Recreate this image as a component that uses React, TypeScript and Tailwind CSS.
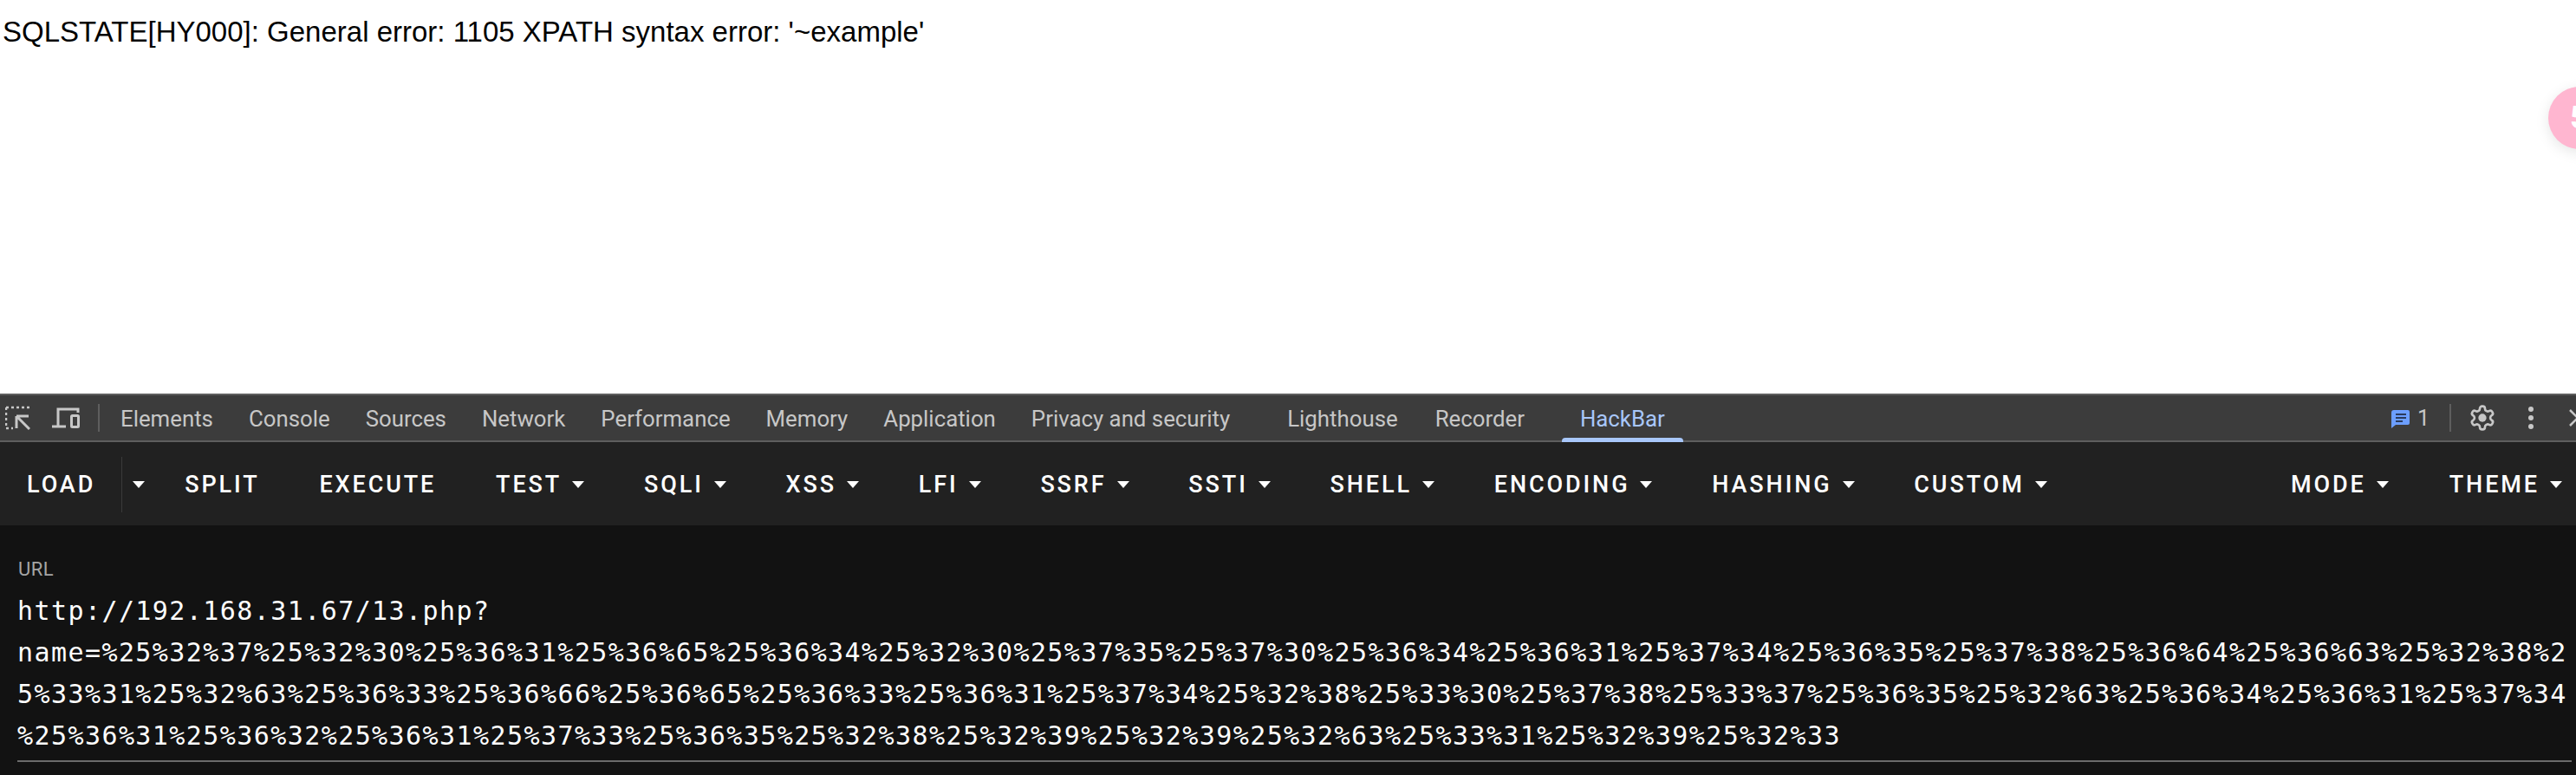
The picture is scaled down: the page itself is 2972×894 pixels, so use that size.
const leftTabs = ['Elements', 'Console', 'Sources', 'Network', 'Performance', 'Memory', 'Application', 'Privacy and security']

const menus = ['TEST', 'SQLI', 'XSS', 'LFI', 'SSRF', 'SSTI', 'SHELL', 'ENCODING', 'HASHING', 'CUSTOM']

const urlLines = [
  'http://192.168.31.67/13.php?',
  'name=%25%32%37%25%32%30%25%36%31%25%36%65%25%36%34%25%32%30%25%37%35%25%37%30%25%36%34%25%36%31%25%37%34%25%36%35%25%37%38%25%36%64%25%36%63%25%32%38%2',
  '5%33%31%25%32%63%25%36%33%25%36%66%25%36%65%25%36%33%25%36%31%25%37%34%25%32%38%25%33%30%25%37%38%25%33%37%25%36%35%25%32%63%25%36%34%25%36%31%25%37%34',
  '%25%36%31%25%36%32%25%36%31%25%37%33%25%36%35%25%32%38%25%32%39%25%32%39%25%32%63%25%33%31%25%32%39%25%32%33',
]

function Caret() {
  return <span className="ml-[12px] h-0 w-0 border-x-[7.5px] border-t-[8px] border-x-transparent border-t-white" />
}

function MenuButton({ label, caret = true }: { label: string; caret?: boolean }) {
  return (
    <button type="button" className="flex items-center text-[27px] font-medium tracking-[2.9px] text-white">
      {label}
      {caret && <Caret />}
    </button>
  )
}

export default function App() {
  return (
    <div className="relative flex h-[894px] w-[2972px] flex-col overflow-hidden bg-white font-['Roboto',sans-serif]">
      <div className="h-[454px] pl-[3px] pt-[18px] font-['Liberation_Sans',sans-serif] text-[33px] leading-[37px] text-black">
        SQLSTATE[HY000]: General error: 1105 XPATH syntax error: '~example'
      </div>

      {/* floating pink button, cut by the window edge */}
      <div className="absolute left-[2940px] top-[100px] flex h-[72px] w-[72px] items-center rounded-full bg-[#ffb6d0] pl-[25px] text-[36px] font-bold text-white shadow-[0_4px_16px_rgba(0,0,0,0.1)]">
        5
      </div>

      {/* devtools tab strip */}
      <div className="flex h-[56px] shrink-0 items-center border-y-2 border-[#5e5e5e] bg-[#3c3c3c] text-[#c7c7c7]">
        <svg width="29" height="28" viewBox="0 0 29 28" className="ml-[6px] shrink-0" fill="none" stroke="#c7c7c7">
          <path d="M1 2h27M1 2v24M1 26h8" strokeWidth="2.5" strokeDasharray="3 3" />
          <path d="M13 12h14M13 12v14M13 12l15 15" strokeWidth="3" />
        </svg>
        <svg width="32" height="24" viewBox="0 0 32 24" className="ml-[25px] shrink-0" fill="none" stroke="#c7c7c7">
          <path d="M0 22h16M7 22V2h23v4" strokeWidth="3" />
          <rect x="22.5" y="9.5" width="8" height="13" rx="1" strokeWidth="3" />
        </svg>
        <span className="ml-[21px] h-[32px] w-[2px] shrink-0 bg-[#5e5e5e]" />
        <div className="ml-[24px] flex gap-[41px] pt-[3px] text-[25.8px] leading-none">
          {leftTabs.map(t => (
            <span key={t}>{t}</span>
          ))}
        </div>
        <div className="ml-[66px] flex gap-[43px] pt-[3px] text-[25.8px] leading-none">
          <span>Lighthouse</span>
          <span>Recorder</span>
        </div>
        <div className="relative ml-[43px] flex h-full items-center px-[21px] pt-[3px] text-[25.8px] leading-none text-[#a8c7fa]">
          HackBar
          <span className="absolute inset-x-0 -bottom-[2px] h-[5px] rounded-t-[4px] bg-[#a8c7fa]" />
        </div>
        <div className="ml-auto flex shrink-0 items-center">
          <svg width="21" height="21" viewBox="0 0 21 21" className="mt-[3px]">
            <path d="M3 0h16a2 2 0 0 1 2 2v13a2 2 0 0 1-2 2H5l-5 4V3a3 3 0 0 1 3-3z" fill="#6c9eff" />
            <path d="M5 5h12M5 9h12M5 13h8" stroke="#2a3b5c" strokeWidth="2" />
          </svg>
          <span className="ml-[9px] text-[25px] leading-none">1</span>
          <span className="ml-[23px] h-[32px] w-[2px] bg-[#5e5e5e]" />
          <svg width="32" height="32" viewBox="0 0 24 24" className="ml-[20px]" fill="none" stroke="#c7c7c7" strokeWidth="2">
            <path d="M12.22 2h-.44a2 2 0 0 0-2 2v.18a2 2 0 0 1-1 1.73l-.43.25a2 2 0 0 1-2 0l-.15-.08a2 2 0 0 0-2.73.73l-.22.38a2 2 0 0 0 .73 2.73l.15.1a2 2 0 0 1 1 1.72v.51a2 2 0 0 1-1 1.74l-.15.09a2 2 0 0 0-.73 2.73l.22.38a2 2 0 0 0 2.73.73l.15-.08a2 2 0 0 1 2 0l.43.25a2 2 0 0 1 1 1.73V20a2 2 0 0 0 2 2h.44a2 2 0 0 0 2-2v-.18a2 2 0 0 1 1-1.73l.43-.25a2 2 0 0 1 2 0l.15.08a2 2 0 0 0 2.73-.73l.22-.39a2 2 0 0 0-.73-2.73l-.15-.08a2 2 0 0 1-1-1.74v-.5a2 2 0 0 1 1-1.74l.15-.09a2 2 0 0 0 .73-2.73l-.22-.38a2 2 0 0 0-2.73-.73l-.15.08a2 2 0 0 1-2 0l-.43-.25a2 2 0 0 1-1-1.73V4a2 2 0 0 0-2-2z" />
            <circle cx="12" cy="12" r="3.5" fill="#c7c7c7" stroke="none" />
          </svg>
          <svg width="6" height="26" viewBox="0 0 6 26" className="ml-[37px]" fill="#c7c7c7">
            <circle cx="3" cy="3" r="3" />
            <circle cx="3" cy="13" r="3" />
            <circle cx="3" cy="23" r="3" />
          </svg>
          <svg width="20" height="20" viewBox="0 0 20 20" className="-mr-[12px] ml-[41px]" stroke="#c7c7c7" strokeWidth="2.5">
            <path d="M1 1l18 18M19 1L1 19" />
          </svg>
        </div>
      </div>

      {/* hackbar toolbar */}
      <div className="flex h-[96px] shrink-0 items-center bg-[#212121] pl-[31px] pr-[16px] pt-[2px]">
        <MenuButton label="LOAD" caret={false} />
        <span className="ml-[30px] h-[64px] w-[1px] bg-[#3a3a3a]" />
        <Caret />
        <div className="ml-[46px] flex gap-[68.8px]">
          <MenuButton label="SPLIT" caret={false} />
          <MenuButton label="EXECUTE" caret={false} />
          {menus.map(m => (
            <MenuButton key={m} label={m} />
          ))}
        </div>
        <div className="ml-auto flex gap-[70px]">
          <MenuButton label="MODE" />
          <MenuButton label="THEME" />
        </div>
      </div>

      {/* url field */}
      <div className="flex-1 bg-[#121212] pl-[20px] pr-[5px]">
        <div className="pl-[1px] pt-[39px] text-[22px] leading-[24px] tracking-[0.5px] text-[#a5a5a5]">URL</div>
        <div className="mt-[12px] font-['DejaVu_Sans_Mono',monospace] text-[30px] leading-[48px] tracking-[1.42px] text-white">
          {urlLines.map(l => (
            <div key={l} className="whitespace-nowrap">{l}</div>
          ))}
        </div>
        <div className="mt-[4px] h-[2px] bg-[#6b6b6b]" />
      </div>
    </div>
  )
}
